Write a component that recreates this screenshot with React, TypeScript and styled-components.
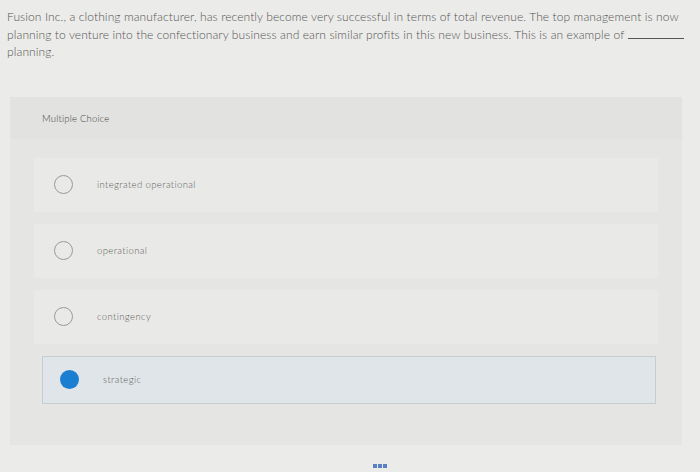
import React from 'react'
import styled, { createGlobalStyle } from 'styled-components'

const GlobalStyle = createGlobalStyle`
  html, body {
    margin: 0;
    padding: 0;
    background: #ebebe9;
  }
  body {
    font-family: Lato, "Open Sans", "Liberation Sans", sans-serif;
  }
`

const options = [
  { label: 'integrated operational', selected: false },
  { label: 'operational', selected: false },
  { label: 'contingency', selected: false },
  { label: 'strategic', selected: true },
]

export default function App() {
  return (
    <>
      <GlobalStyle />
      <Page>
        <Question>
          Fusion Inc., a clothing manufacturer, has recently become very successful in terms of total
          revenue. The top management is now planning to venture into the confectionary business and
          earn similar profits in this new business. This is an example of <Blank /> planning.
        </Question>

        <Panel>
          <PanelHeader>Multiple Choice</PanelHeader>
          <OptionList>
            {options.map(o => (
              <Option key={o.label} selected={o.selected}>
                <Radio selected={o.selected} />
                <OptionLabel>{o.label}</OptionLabel>
              </Option>
            ))}
          </OptionList>
        </Panel>

        <Pager>
          <Dot />
          <Dot />
          <Dot />
        </Pager>
      </Page>
    </>
  )
}

const Page = styled.div`
  width: 700px;
  height: 472px;
  overflow: hidden;
  box-sizing: border-box;
  padding: 8px 0 0 0;
`

const Question = styled.p`
  margin: 0 0 0 7px;
  width: 684px;
  font-size: 12px;
  font-weight: 300;
  line-height: 17.5px;
  color: #555;
  letter-spacing: 0.1px;
`

const Blank = styled.span`
  display: inline-block;
  width: 56px;
  border-bottom: 1px solid #555;
  vertical-align: baseline;
`

const Panel = styled.section`
  margin: 36px 0 0 10px;
  width: 672px;
  height: 348px;
  background: #e5e5e3;
  display: flex;
  flex-direction: column;
`

const PanelHeader = styled.div`
  box-sizing: border-box;
  padding: 16px 0 0 32px;
  height: 42px;
  font-size: 9.5px;
  font-weight: 300;
  color: #3f3f3f;
  letter-spacing: 0.2px;
  background: #e2e2e0;
`

const OptionList = styled.div`
  display: flex;
  flex-direction: column;
  gap: 12px;
  padding: 19px 24px 0 24px;
`

const Option = styled.div<{ selected: boolean }>`
  display: flex;
  align-items: center;
  height: ${p => (p.selected ? 48 : 54)}px;
  margin: ${p => (p.selected ? '0 2px 0 8px' : '0')};
  box-sizing: border-box;
  padding-left: ${p => (p.selected ? 17 : 19)}px;
  background: ${p => (p.selected ? '#dfe5e8' : '#e9e9e7')};
  border: 1px solid ${p => (p.selected ? '#c6cdd0' : 'transparent')};
`

const Radio = styled.span<{ selected: boolean }>`
  width: 19px;
  height: 19px;
  border-radius: 50%;
  box-sizing: border-box;
  flex: none;
  border: ${p => (p.selected ? 'none' : '1px solid #9a9a9a')};
  background: ${p => (p.selected ? '#1b7fd1' : 'transparent')};
  margin-right: 24px;
`

const OptionLabel = styled.span`
  font-size: 9.5px;
  font-weight: 300;
  color: #5f5f5f;
  letter-spacing: 0.4px;
`

const Pager = styled.div`
  display: flex;
  gap: 1px;
  margin: 19px 0 0 373px;
`

const Dot = styled.span`
  width: 4px;
  height: 4px;
  background: #5a7fc4;
`
